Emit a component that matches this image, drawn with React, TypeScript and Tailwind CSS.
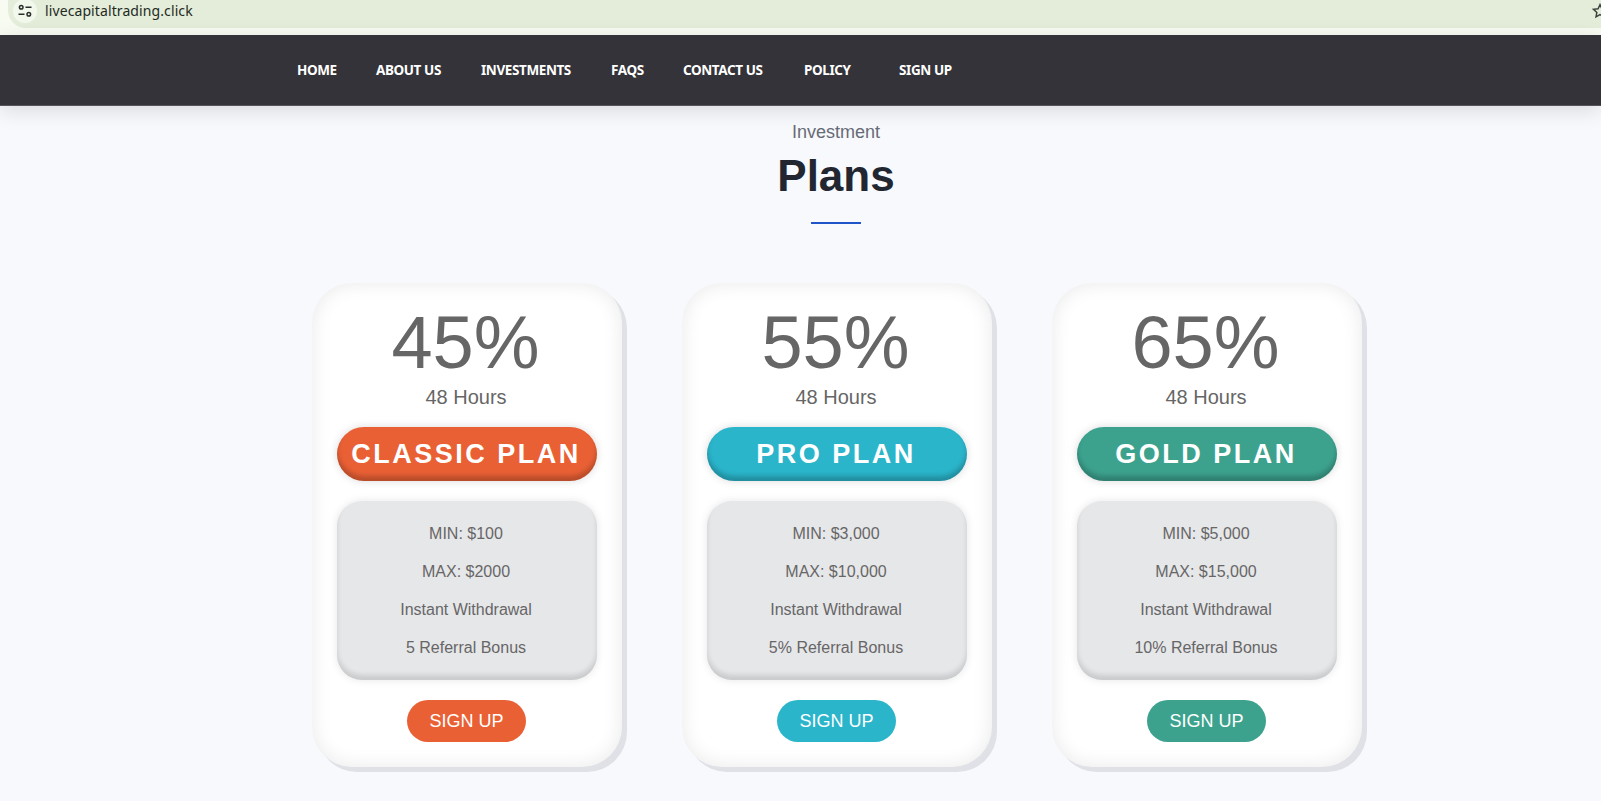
import React from 'react';

const NAV_ITEMS = [
  { label: 'HOME', className: 'w-[79px]' },
  { label: 'ABOUT US', className: 'w-[105px]' },
  { label: 'INVESTMENTS', className: 'w-[130px]' },
  { label: 'FAQS', className: 'w-[72px]' },
  { label: 'CONTACT US', className: 'w-[121px]' },
  { label: 'POLICY', className: 'w-[95px]' },
  { label: 'SIGN UP', className: 'w-[70px]' },
];

const PLANS = [
  {
    rate: '45%',
    name: 'CLASSIC PLAN',
    pill: 'bg-[#ea6035] shadow-[inset_0_-5px_5px_rgba(0,0,0,0.22),0_0_8px_rgba(0,0,0,0.15)]',
    button: 'bg-[#ea6035]',
    features: ['MIN: $100', 'MAX: $2000', 'Instant Withdrawal', '5 Referral Bonus'],
  },
  {
    rate: '55%',
    name: 'PRO PLAN',
    pill: 'bg-[#2ab5cb] shadow-[inset_0_-5px_5px_rgba(0,0,0,0.22),0_0_8px_rgba(0,0,0,0.15)]',
    button: 'bg-[#2ab5cb]',
    features: ['MIN: $3,000', 'MAX: $10,000', 'Instant Withdrawal', '5% Referral Bonus'],
  },
  {
    rate: '65%',
    name: 'GOLD PLAN',
    pill: 'bg-[#3ca28e] shadow-[inset_0_-5px_5px_rgba(0,0,0,0.22),0_0_8px_rgba(0,0,0,0.15)]',
    button: 'bg-[#3ca28e]',
    features: ['MIN: $5,000', 'MAX: $15,000', 'Instant Withdrawal', '10% Referral Bonus'],
  },
];

const BrowserBar = () => (
  <div className="h-[35px] bg-[#f8fbf2] pl-2 overflow-hidden">
    <div className="h-[28px] bg-[#e3edda] rounded-bl-[18px] flex items-start pl-[5px] font-['Noto_Sans',sans-serif] overflow-hidden">
      <div className="w-6 h-6 -mt-px rounded-full bg-[#f3f8ed] flex items-center justify-center shrink-0">
        <svg width="14" height="14" viewBox="0 0 14 14" fill="none" stroke="#2b2f2b" strokeWidth="1.5">
          <circle cx="3.2" cy="3.2" r="1.8" />
          <path d="M7.5 3.2h6" />
          <circle cx="10.8" cy="10.2" r="1.8" />
          <path d="M0.5 10.2h6" />
        </svg>
      </div>
      <span className="ml-[8px] text-[14px] leading-[21px] text-[#1f2a1f] tracking-[0.1px]">livecapitaltrading.click</span>
      <svg className="ml-auto mt-[3px] -mr-[7px] shrink-0" width="16" height="16" viewBox="0 0 24 24" fill="none" stroke="#3c433c" strokeWidth="2.2">
        <path d="M12 2.5l2.9 6.2 6.8.8-5 4.6 1.3 6.7-6-3.3-6 3.3 1.3-6.7-5-4.6 6.8-.8z" />
      </svg>
    </div>
  </div>
);

const PlanCard = ({ plan }: { plan: (typeof PLANS)[number] }) => (
  <div className="w-[310px] h-[484px] rounded-[40px] bg-white pt-[18px] flex flex-col items-center shadow-[inset_0_0_20px_rgba(0,0,0,0.09),5px_5px_0_#dfe1e6]">
    <div className="pr-[3px] text-[74px] leading-[84px] text-[#666666]">{plan.rate}</div>
    <div className="pr-[2px] text-[20px] leading-[24px] text-[#666666]">48 Hours</div>
    <div className={`mt-[18px] pr-[2px] w-[260px] h-[54px] rounded-[27px] flex items-center justify-center text-white font-bold text-[27px] tracking-[2.5px] ${plan.pill}`}>
      {plan.name}
    </div>
    <div className="mt-[20px] pr-[2px] w-[260px] h-[179px] rounded-[25px] bg-[#e6e7e9] pt-[14px] flex flex-col items-center text-[16px] leading-[38px] text-[#666666] shadow-[inset_0_-5px_5px_rgba(0,0,0,0.12),0_0_8px_rgba(0,0,0,0.1)]">
      {plan.features.map((feature) => (
        <div key={feature}>{feature}</div>
      ))}
    </div>
    <div className={`mt-[20px] mr-[1px] w-[119px] h-[42px] rounded-[21px] flex items-center justify-center text-white text-[18px] ${plan.button}`}>
      SIGN UP
    </div>
  </div>
);

export default function App() {
  return (
    <div className="h-[801px] overflow-hidden bg-[#f8f9fd] font-['Liberation_Sans',Arial,sans-serif]">
      <BrowserBar />
      <nav className="relative h-[71px] bg-[#343339] border-b border-[#55555b] flex items-center pl-[297px] shadow-[0_5px_20px_rgba(0,0,0,0.12)] font-['Noto_Sans',sans-serif]">
        {NAV_ITEMS.map((item) => (
          <a key={item.label} className={`${item.className} text-white font-bold text-[13.5px] tracking-[-0.4px]`}>
            {item.label}
          </a>
        ))}
      </nav>
      <div className="pl-[71px]">
        <div className="pt-[13px] flex flex-col items-center">
          <div className="text-[18px] leading-[27px] text-[#666b75]">Investment</div>
          <h2 className="mt-[3px] text-[44px] leading-[54px] font-bold text-[#212631]">Plans</h2>
          <div className="mt-[19px] w-[50px] h-[2px] bg-[#1f55c8]" />
        </div>
        <div className="mt-[59px] pl-[2px] flex justify-center gap-[60px]">
          {PLANS.map((plan) => (
            <PlanCard key={plan.name} plan={plan} />
          ))}
        </div>
      </div>
    </div>
  );
}
